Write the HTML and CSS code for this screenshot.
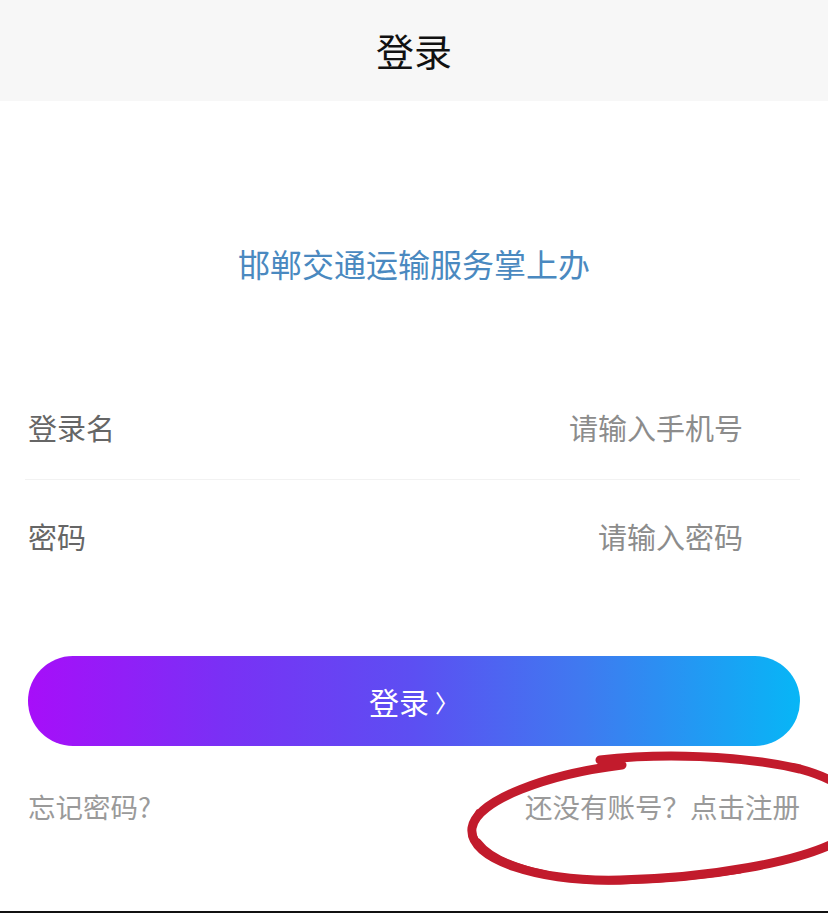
FILE: index.html
```html
<!DOCTYPE html>
<html lang="zh-CN">
<head>
<meta charset="utf-8">
<title>登录</title>
<link rel="stylesheet" href="styles.css">
</head>
<body>
<div class="page">
  <header class="topbar"><h1 class="topbar-title">登录</h1></header>
  <div class="brand">邯郸交通运输服务掌上办</div>
  <form class="form">
    <div class="row row-first">
      <span class="label">登录名</span>
      <input class="field" type="text" placeholder="请输入手机号">
    </div>
    <div class="divider"></div>
    <div class="row row-second">
      <span class="label">密码</span>
      <input class="field" type="password" placeholder="请输入密码">
    </div>
    <button class="submit" type="button">登录<span class="chev">〉</span></button>
    <div class="links">
      <span class="link">忘记密码?</span>
      <span class="link">还没有账号？点击注册</span>
    </div>
  </form>
  <div class="bottom-edge"></div>
  <svg class="annotation" viewBox="0 0 828 913" width="828" height="913" aria-hidden="true">
    <path d="M622 765 C548 774 476 800 472 828 C468 860 540 882 620 880 C710 878 800 862 840 840 C872 818 862 786 800 769 C740 755 660 753 600 760" fill="none" stroke="#c21b2c" stroke-width="9" stroke-linecap="round"/>
    <path d="M478 842 C496 866 556 882 620 881 C660 880 700 876 740 870" fill="none" stroke="#c21b2c" stroke-width="7" stroke-linecap="round"/>
    <path d="M478 812 C472 822 472 832 476 840" fill="none" stroke="#c21b2c" stroke-width="5" stroke-linecap="round"/>
  </svg>
</div>
</body>
</html>
```
FILE: styles.css
```css
html, body {
  margin: 0;
  padding: 0;
  background: #ffffff;
}
body {
  font-family: "Noto Sans CJK SC", "Noto Sans", sans-serif;
}
.page {
  position: relative;
  width: 828px;
  min-height: 913px;
  display: flex;
  flex-direction: column;
  overflow: hidden;
}
.topbar {
  height: 101px;
  background: #f7f7f7;
  display: flex;
  align-items: center;
  justify-content: center;
}
.topbar-title {
  margin: 0;
  font-size: 38px;
  font-weight: 400;
  color: #111;
  line-height: 1;
  padding-bottom: 2px;
}
.brand {
  margin-top: 140px;
  height: 44px;
  line-height: 44px;
  text-align: center;
  font-size: 32px;
  color: #4a89c0;
}
.form {
  display: flex;
  flex-direction: column;
  margin: 0;
  margin-top: 90px;
}
.row {
  display: flex;
  align-items: center;
  justify-content: space-between;
  padding: 0 85px 0 28px;
}
.row-first { height: 104px; }
.row-second { height: 112px; }
.label {
  font-size: 29px;
  color: #666;
  line-height: 1;
  flex: none;
}
.field {
  flex: 1;
  min-width: 0;
  border: none;
  outline: none;
  background: transparent;
  text-align: right;
  font-family: inherit;
  font-size: 29px;
  color: #333;
  padding: 0;
}
.field::placeholder {
  color: #8c8c8c;
}
.divider {
  height: 1px;
  margin: 0 28px 0 25px;
  background: #f2f2f2;
}
.submit {
  margin: 64px 28px 0 28px;
  height: 90px;
  border: none;
  border-radius: 45px;
  background: linear-gradient(90deg, #a70ef9 0%, #7a30f5 25%, #5c4ff2 50%, #3f7af0 72%, #07b6f6 100%);
  color: #fff;
  font-family: inherit;
  font-size: 30px;
  display: flex;
  align-items: center;
  justify-content: center;
  padding: 0;
}
.chev {
  font-size: 24px;
  margin-left: 6px;
}
.links {
  margin-top: 41px;
  padding: 0 28px;
  display: flex;
  justify-content: space-between;
  align-items: center;
  height: 40px;
}
.link {
  font-size: 27.5px;
  color: #9a9a9a;
  line-height: 1;
}
.bottom-edge {
  margin-top: auto;
  height: 2px;
  background: #111;
}
.annotation {
  position: absolute;
  left: 0;
  top: 0;
  pointer-events: none;
}
```
